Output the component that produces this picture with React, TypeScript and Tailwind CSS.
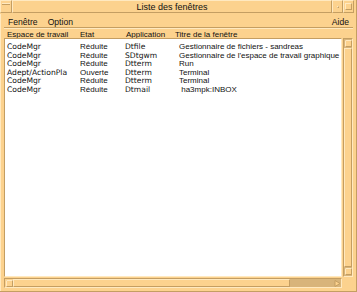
import React from "react";

const rows = [
  ["CodeMgr", "Réduite", "Dtfile", "Gestionnaire de fichiers - sandreas"],
  ["CodeMgr", "Réduite", "SDtgwm", "Gestionnaire de l'espace de travail graphique"],
  ["CodeMgr", "Réduite", "Dtterm", "Run"],
  ["Adept/ActionPla", "Ouverte", "Dtterm", "Terminal"],
  ["CodeMgr", "Réduite", "Dtterm", "Terminal"],
  ["CodeMgr", "Réduite", "Dtmail", " ha3mpk:INBOX"],
];

const sans = { fontFamily: '"Liberation Sans", Arial, sans-serif' };
const deja = { fontFamily: '"DejaVu Sans", sans-serif' };

export default function App() {
  return (
    <div
      className="w-[357px] h-[292px] bg-[#fcd28e] flex flex-col overflow-hidden text-[#111] border-r border-b border-[#c49e62]"
      style={sans}
    >
      {/* Title bar */}
      <div className="flex h-[14px] shrink-0">
        <div className="w-[12px] h-[13px] border-t border-l border-[#ffe9c0] border-b border-r border-b-[#c49e62] border-r-[#c49e62] flex items-start justify-center pt-[2px]">
          <div className="w-[8px] h-[2px] border-t border-[#ffe9c0] border-b border-b-[#c49e62]" />
        </div>
        <div className="flex-1 h-[13px] border-t border-l border-[#ffe9c0] border-b border-r border-b-[#c49e62] border-r-[#c49e62] text-center text-[9px] leading-[11px] pt-[1px]">
          Liste des fenêtres
        </div>
        <div className="w-[11px] h-[13px] border-t border-l border-[#ffe9c0] border-b border-r border-b-[#c49e62] border-r-[#c49e62] flex items-center justify-center">
          <div className="w-[2px] h-[2px] border-t border-l border-[#ffe9c0] border-b border-r border-b-[#c49e62] border-r-[#c49e62]" />
        </div>
        <div className="w-[11px] h-[13px] border-t border-l border-[#ffe9c0] border-b border-r border-b-[#c49e62] border-r-[#c49e62] flex items-center justify-center">
          <div className="w-[7px] h-[7px] border-t border-l border-[#ffe9c0] border-b border-r border-b-[#c49e62] border-r-[#c49e62]" />
        </div>
        <div className="w-[2px]" />
      </div>

      {/* Client area */}
      <div className="flex-1 flex flex-col pl-[3px] pr-[3px] pb-[3px] border-l border-[#ffe9c0]">
        {/* Menu bar */}
        <div className="h-[14px] shrink-0 flex items-center justify-between border-b border-[#c49e62] text-[8.6px] leading-[10px] pl-[4px] pr-[4px] pt-[3px]">
          <div className="flex gap-[10px]">
            <span>Fenêtre</span>
            <span>Option</span>
          </div>
          <span>Aide</span>
        </div>

        {/* Column headers */}
        <div className="h-[10px] shrink-0 grid grid-cols-[73px_46px_49px_1fr] pl-[3px] text-[8px] leading-[10px] border-t border-[#ffe9c0] pt-[1px]">
          <span>Espace de travail</span>
          <span>Etat</span>
          <span>Application</span>
          <span>Titre de la fenêtre</span>
        </div>

        {/* Body */}
        <div className="flex-1 flex gap-[1px] min-h-0">
          <div className="flex-1 bg-white border-t border-l border-[#c49e62] border-b border-r border-b-[#ffe9c0] border-r-[#ffe9c0] pt-[4px] pl-[2px]">
            {rows.map((r, i) => (
              <div
                key={i}
                className="grid grid-cols-[73px_45px_54px_1fr] h-[8.6px] text-[8px] leading-[8.6px] whitespace-pre"
              >
                <span style={deja} className="text-[7.6px]">{r[0]}</span>
                <span>{r[1]}</span>
                <span style={deja} className="text-[7.6px]">{r[2]}</span>
                <span>{r[3]}</span>
              </div>
            ))}
          </div>
          {/* Vertical scrollbar */}
          <div className="w-[10px] flex flex-col border-t border-l border-[#c49e62] border-b border-r border-b-[#ffe9c0] border-r-[#ffe9c0] bg-[#d8b47a]">
            <div className="h-[9px] shrink-0 flex items-center justify-center">
              <svg width="7" height="7" viewBox="0 0 7 7">
                <rect x="0.5" y="0.5" width="6" height="6" fill="#fcd28e" stroke="#c49e62" />
                <path d="M0.5 6.5V0.5H6.5" fill="none" stroke="#ffe9c0" />
              </svg>
            </div>
            <div className="flex-1 bg-[#fcd28e] border-t border-l border-[#ffe9c0] border-b border-r border-b-[#c49e62] border-r-[#c49e62]" />
            <div className="h-[9px] shrink-0 flex items-center justify-center">
              <svg width="7" height="7" viewBox="0 0 7 7">
                <rect x="0.5" y="0.5" width="6" height="6" fill="#fcd28e" stroke="#c49e62" />
                <path d="M0.5 6.5V0.5H6.5" fill="none" stroke="#ffe9c0" />
              </svg>
            </div>
          </div>
        </div>

        {/* Horizontal scrollbar */}
        <div className="h-[11px] shrink-0 flex gap-[1px] pt-[1px]">
          <div className="flex-1 flex border-t border-l border-[#c49e62] border-b border-r border-b-[#ffe9c0] border-r-[#ffe9c0] bg-[#d8b47a]">
            <div className="w-[8px] shrink-0 flex items-center justify-center bg-[#fcd28e]">
              <svg width="7" height="7" viewBox="0 0 7 7">
                <rect x="0.5" y="0.5" width="6" height="6" fill="#fcd28e" stroke="#c49e62" />
                <path d="M0.5 6.5V0.5H6.5" fill="none" stroke="#ffe9c0" />
              </svg>
            </div>
            <div className="w-[277px] shrink-0 bg-[#fcd28e] border-t border-l border-[#ffe9c0] border-b border-r border-b-[#c49e62] border-r-[#c49e62]" />
            <div className="flex-1" />
            <div className="w-[8px] shrink-0 flex items-center justify-center">
              <svg width="7" height="7" viewBox="0 0 7 7">
                <path d="M1 0.5L6 3.5L1 6.5Z" fill="#fcd28e" stroke="#c49e62" />
              </svg>
            </div>
          </div>
          <div className="w-[10px] shrink-0" />
        </div>
      </div>
    </div>
  );
}
